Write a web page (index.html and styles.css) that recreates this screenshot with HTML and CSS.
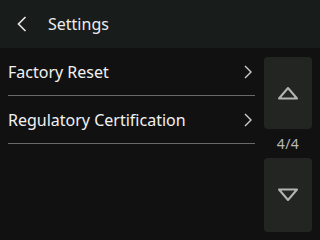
FILE: index.html
```html
<!DOCTYPE html>
<html>
<head>
<meta charset="utf-8">
<link rel="stylesheet" href="styles.css">
</head>
<body>
<div class="screen">
  <header class="header">
    <svg class="back" width="10" height="16" viewBox="0 0 10 16"><path d="M8.5 1 L1.5 8 L8.5 15" fill="none" stroke="#e8e8e8" stroke-width="1.6"/></svg>
    <span class="title">Settings</span>
  </header>
  <div class="main">
    <div class="list">
      <div class="row"><span class="label">Factory Reset</span><svg class="chev" width="8" height="14" viewBox="0 0 8 14"><path d="M1 1 L7 7 L1 13" fill="none" stroke="#cfcfcf" stroke-width="1.4"/></svg></div>
      <div class="row"><span class="label">Regulatory Certification</span><svg class="chev" width="8" height="14" viewBox="0 0 8 14"><path d="M1 1 L7 7 L1 13" fill="none" stroke="#cfcfcf" stroke-width="1.4"/></svg></div>
    </div>
    <div class="pager">
      <div class="btn up"><svg width="22" height="14" viewBox="0 0 22 14"><path d="M2 12.5 L11 2 L20 12.5 Z" fill="none" stroke="#b4b4b4" stroke-width="2" stroke-linejoin="round"/></svg></div>
      <div class="count">4/4</div>
      <div class="btn down"><svg width="22" height="14" viewBox="0 0 22 14"><path d="M2 1.5 L11 12 L20 1.5 Z" fill="none" stroke="#b4b4b4" stroke-width="2" stroke-linejoin="round"/></svg></div>
    </div>
  </div>
</div>
</body>
</html>
```
FILE: styles.css
```css
html, body {
  margin: 0;
  padding: 0;
  background: #111111;
}
.screen {
  width: 320px;
  height: 240px;
  overflow: hidden;
  background: #111111;
  font-family: "Noto Sans", "DejaVu Sans", sans-serif;
  color: #f0f0f0;
  display: flex;
  flex-direction: column;
}
.header {
  height: 48px;
  background: #181c1a;
  display: flex;
  align-items: center;
  padding-left: 17px;
  box-sizing: border-box;
}
.back {
  display: block;
}
.title {
  margin-left: 21px;
  font-size: 16px;
  color: #ededed;
}
.main {
  flex: 1;
  display: flex;
}
.list {
  width: 247px;
  margin-left: 8px;
}
.row {
  height: 47px;
  border-bottom: 1px solid #6a6a6a;
  display: flex;
  align-items: center;
  justify-content: space-between;
  padding-right: 3px;
}
.label {
  font-size: 16px;
  color: #f2f2f2;
}
.chev {
  display: block;
}
.pager {
  margin-left: 9px;
  width: 48px;
  padding-top: 9px;
  display: flex;
  flex-direction: column;
}
.btn {
  background: #232523;
  border-radius: 4px;
  display: flex;
  align-items: center;
  justify-content: center;
}
.up {
  height: 72px;
}
.down {
  height: 74px;
}
.count {
  height: 29px;
  display: flex;
  align-items: center;
  justify-content: center;
  font-size: 14px;
  letter-spacing: 0.5px;
  color: #b8b8b8;
}
```
